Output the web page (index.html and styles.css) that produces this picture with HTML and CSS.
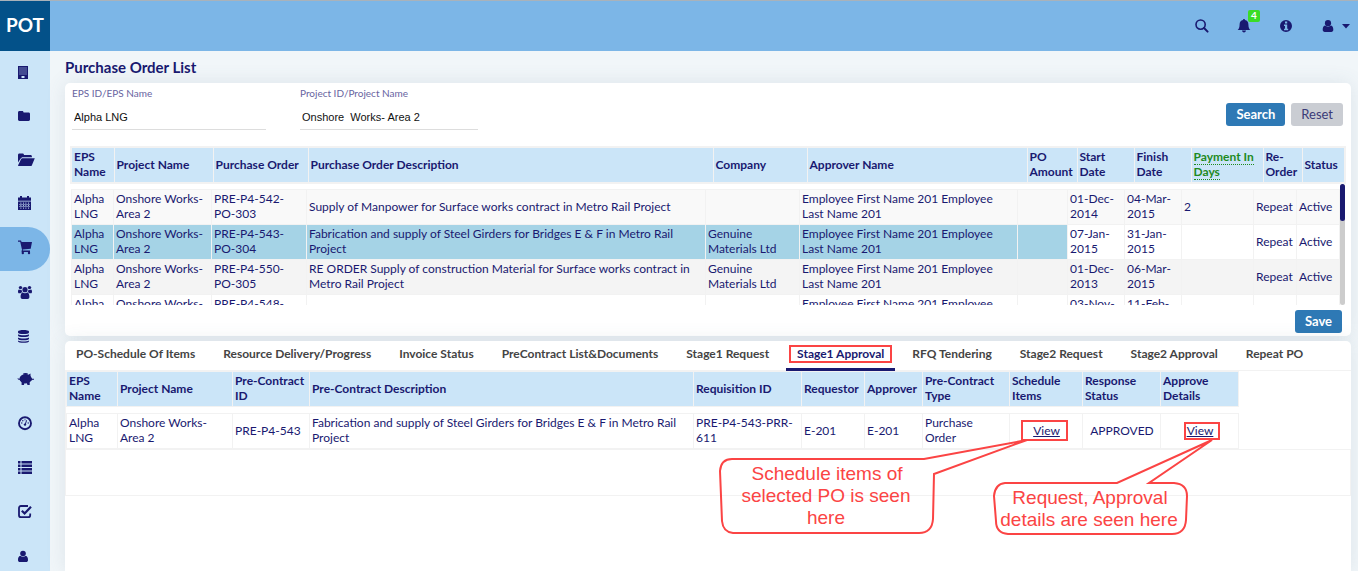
FILE: index.html
```
<!DOCTYPE html>
<html lang="en">
<head>
<meta charset="utf-8">
<title>Purchase Order List</title>
<link rel="stylesheet" href="styles.css">
</head>
<body>
<div class="app">
  <header class="topbar">
    <a class="brand" href="#">POT</a>
    <div class="tools">
      <button class="tool" aria-label="Search"><svg class="icon" viewBox="0 0 16 16"><circle cx="6.6" cy="6.6" r="4.600" fill="none" stroke="currentColor" stroke-width="1.600"/><path d="M10 10l3.600 3.600" stroke="currentColor" stroke-width="2" stroke-linecap="round"/></svg></button>
      <button class="tool" aria-label="Notifications"><svg class="icon" viewBox="0 0 16 16"><path d="M8 1c.7 0 1 .5 1 1.100c2.200.5 3.400 2.200 3.400 4.400 0 3 .8 4.500 2 5.500H1.600c1.200-1 2-2.500 2-5.500 0-2.200 1.200-3.900 3.400-4.400C7 1.500 7.300 1 8 1zM6 12.500h4c0 1.100-.9 1.900-2 1.900s-2-.8-2-1.900z"/></svg><span class="badge">4</span></button>
      <button class="tool" aria-label="Information"><svg class="icon" viewBox="0 0 16 16"><path fill-rule="evenodd" d="M8 2a6 6 0 1 0 0 12A6 6 0 0 0 8 2zM7 3.500h2.200v1.900H7zM6 6.500h3.200v4.200h1v1.500H6v-1.500h1V8H6z"/></svg></button>
      <button class="tool account" aria-label="Account"><svg class="icon" viewBox="0 0 16 16"><circle cx="8" cy="5.200" r="3.100"/><path d="M5 7.500c-1.700.4-2.300 2.200-2.300 4.300 0 1.400.8 2.100 2 2.100h6.600c1.200 0 2-.7 2-2.100 0-2.100-.6-3.900-2.300-4.300-1.600 1.500-4.400 1.500-6 0z"/></svg><svg class="caret" viewBox="0 0 8 5"><path d="M0 0h8L4 4.500z"/></svg></button>
    </div>
  </header>
  <nav class="sidebar" aria-label="Main">
    <a class="nav" href="#" aria-label="Companies"><svg class="nav-icon" viewBox="0 0 18 16"><path fill-rule="evenodd" d="M1 2h10v13H1zM2.500 3.500v1h1v-1zM4.500 3.500v1h1v-1zM6.500 3.500v1h1v-1zM8.500 3.500v1h1v-1zM2.500 5.500v1h1v-1zM4.500 5.500v1h1v-1zM6.500 5.500v1h1v-1zM8.500 5.500v1h1v-1zM2.500 7.500v1h1v-1zM4.500 7.500v1h1v-1zM6.500 7.500v1h1v-1zM8.500 7.500v1h1v-1zM2.500 9.500v1h1v-1zM4.500 9.500v1h1v-1zM6.500 9.500v1h1v-1zM8.500 9.500v1h1v-1zM4.500 12v2h3v-2z"/></svg></a>
    <a class="nav" href="#" aria-label="Folders"><svg class="nav-icon" viewBox="0 0 18 16"><path d="M1 4.500C1 3.600 1.600 3 2.400 3h2.800c.8 0 1.400.6 1.400 1.500h5c.8 0 1.400.6 1.400 1.400v5.700c0 .8-.6 1.400-1.400 1.400H2.400C1.600 13 1 12.400 1 11.600z"/></svg></a>
    <a class="nav" href="#" aria-label="Projects"><svg class="nav-icon" viewBox="0 0 18 16"><path d="M1 10.500V3c0-.9.6-1.500 1.400-1.500h3.200C6.400 1.500 7 2.100 7 3h6.500c.8 0 1.400.6 1.400 1.400v.8H6c-1.200 0-2 .6-2.500 1.500zM5.800 6.200h12l-3 7.200c-.2.500-.6.700-1.100.7h-12c-.5 0-.8-.3-.6-.8l2.900-6.100c.4-.7.9-1 1.800-1z"/></svg></a>
    <a class="nav" href="#" aria-label="Calendar"><svg class="nav-icon" viewBox="0 0 18 16"><path fill-rule="evenodd" d="M3 0h2v1.500h5V0h2v1.500h2v3.300H1V1.500h2zM1 5.500h13V14H1zM3.500 6.500v1.200h.8V6.500zM6 6.500v1.200h.8V6.500zM8.500 6.500v1.200h.8V6.500zM11 6.500v1.200h.8V6.500zM2 8h11v.6H2zM3.500 9v1h.8V9zM6 9v1h.8V9zM8.500 9v1h.8V9zM11 9v1h.8V9zM2 10.500h11v.6H2zM3.500 11.500v1.200h.8v-1.200zM6 11.500v1.200h.8v-1.200zM8.500 11.500v1.200h.8v-1.200zM11 11.500v1.200h.8v-1.200z"/></svg></a>
    <a class="nav active" href="#" aria-label="Purchase orders"><svg class="nav-icon" viewBox="0 0 18 16"><path d="M1 .5h2.700c.3 0 .5.200.6.600L4.500 2H15l-1.300 6.700-8 .9.200 1H13v1.300H5c-.4 0-.6-.3-.5-.7l.5-1.400L3.200 1.800H1z"/><circle cx="5.800" cy="13" r="1.200"/><circle cx="12" cy="13" r="1.200"/></svg></a>
    <a class="nav" href="#" aria-label="Teams"><svg class="nav-icon" viewBox="0 0 18 16"><circle cx="3.500" cy="3.600" r="1.700"/><circle cx="12.500" cy="3.600" r="1.700"/><circle cx="8" cy="5.700" r="2.600"/><path d="M1 7.700c0-1.300.3-2 1-2.200.8.500 1.600.5 2.600.2 0 1 .3 1.900.8 2.500-.8 0-1.400.4-1.800 1H2c-.7 0-1-.6-1-1.500zM15 7.700c0-1.300-.3-2-1-2.200-.8.500-1.600.5-2.600.2 0 1-.3 1.900-.8 2.500.8 0 1.400.4 1.800 1H14c.7 0 1-.6 1-1.500zM3.600 12.800c0-2.300.6-4 2-4.300 1.400 1 3.400 1 4.800 0 1.400.3 2 2 2 4.300 0 1.400-.7 2.200-1.900 2.200h-5c-1.200 0-1.900-.8-1.900-2.200z"/></svg></a>
    <a class="nav" href="#" aria-label="Data"><svg class="nav-icon" viewBox="0 0 18 16"><path d="M1 3.500C1 1.500 12 1.500 12 3.500v1C12 6.500 1 6.500 1 4.500zM1 6.300c2 1.400 9 1.400 11 0v1.300c0 2-11 2-11 0zM1 9.400c2 1.400 9 1.400 11 0v1.300c0 2-11 2-11 0zM1 12.500c2 1.400 9 1.400 11 0v.7c0 2-11 2-11 0z"/></svg></a>
    <a class="nav" href="#" aria-label="Budget"><svg class="nav-icon" viewBox="0 0 18 16"><ellipse cx="8.500" cy="6.800" rx="6" ry="4.600"/><path d="M10.500 3.200l3-1.700v3l1.700 2.200H17v1h-1.500L12.700 10v3h-2.200l-.8-2H7.500l-.6 2H4.600V10L2.800 7.800C1.600 8 .8 7.500.5 6.200h.8c.3.700.8.700 1.500.5z"/><ellipse cx="8.500" cy="2" rx="2.500" ry=".9"/></svg></a>
    <a class="nav" href="#" aria-label="Dashboard"><svg class="nav-icon" viewBox="0 0 18 16"><circle cx="8" cy="7.200" r="6" fill="none" stroke="currentColor" stroke-width="1.900"/><circle cx="4.800" cy="7" r=".7"/><circle cx="5.800" cy="4.800" r=".7"/><circle cx="8" cy="3.800" r=".6"/><circle cx="11.200" cy="7" r=".7"/><path d="M9.600 4.300l-1.300 4" stroke="currentColor"/><circle cx="8" cy="8.600" r="1.200"/></svg></a>
    <a class="nav" href="#" aria-label="Lists"><svg class="nav-icon" viewBox="0 0 18 16"><path d="M1 1h2.500v2.500H1zM4.500 1H15v2.500H4.500zM1 4.500h2.500V7H1zM4.500 4.500H15V7H4.500zM1 8h2.500v2.500H1zM4.500 8H15v2.500H4.500zM1 11.500h2.500V14H1zM4.500 11.500H15V14H4.500z"/></svg></a>
    <a class="nav" href="#" aria-label="Approvals"><svg class="nav-icon" viewBox="0 0 18 16"><path d="M11 2H4C2.700 2 2 2.800 2 4v7.200c0 1.200.7 2 2 2h7.200c1.200 0 2-.8 2-2V9.500" fill="none" stroke="currentColor" stroke-width="1.800"/><path d="M4.800 6.700L7.600 9.400l6.400-6.600" fill="none" stroke="currentColor" stroke-width="2.200"/></svg></a>
    <a class="nav" href="#" aria-label="Users"><svg class="nav-icon" viewBox="0 0 18 16"><circle cx="6" cy="5.500" r="2.800"/><path d="M3.300 7.800C1.700 8.100 1 9.800 1 11.900 1 13.300 1.800 14 2.900 14h6.200c1.100 0 1.900-.7 1.900-2.100 0-2.100-.7-3.800-2.300-4.100-1.500 1.400-3.900 1.400-5.400 0z"/></svg></a>
  </nav>
  <main class="main">
    <h1 class="title">Purchase Order List</h1>
    <section class="card orders">
      <form class="filters">
        <div class="field eps"><label for="eps">EPS ID/EPS Name</label><input id="eps" type="text" value="Alpha LNG"></div>
        <div class="field project"><label for="project">Project ID/Project Name</label><input id="project" type="text" value="Onshore  Works- Area 2"></div>
        <div class="filter-actions"><button class="btn primary" type="button">Search</button><button class="btn muted" type="button">Reset</button></div>
      </form>
      <div class="grid">
        <table class="table head">
          <colgroup><col class="w43"><col class="w99"><col class="w95"><col><col class="w94"><col class="w220"><col class="w50"><col class="w57"><col class="w57"><col class="w72"><col class="w39"><col class="w43"></colgroup>
          <thead><tr><th>EPS Name</th><th>Project Name</th><th>Purchase Order</th><th>Purchase Order Description</th><th>Company</th><th>Approver Name</th><th>PO Amount</th><th>Start Date</th><th>Finish Date</th><th><a class="pay" href="#">Payment In Days</a></th><th>Re-Order</th><th>Status</th></tr></thead>
        </table>
        <div class="scroller">
          <div class="viewport">
            <table class="table body">
              <colgroup><col class="w42"><col class="w98"><col class="w95"><col><col class="w94"><col class="w218"><col class="w50"><col class="w57"><col class="w57"><col class="w72"><col class="w43"><col class="w43"></colgroup>
              <tbody>
                <tr class="soft"><td>Alpha LNG</td><td>Onshore Works- Area 2</td><td>PRE-P4-542-PO-303</td><td>Supply of Manpower for Surface works contract in Metro Rail Project</td><td></td><td>Employee First Name 201 Employee Last Name 201</td><td></td><td>01-Dec-2014</td><td>04-Mar-2015</td><td>2</td><td>Repeat</td><td>Active</td></tr>
                <tr class="selected"><td>Alpha LNG</td><td>Onshore Works- Area 2</td><td>PRE-P4-543-PO-304</td><td>Fabrication and supply of Steel Girders for Bridges E &amp; F in Metro Rail Project</td><td>Genuine Materials Ltd</td><td>Employee First Name 201 Employee Last Name 201</td><td></td><td>07-Jan-2015</td><td>31-Jan-2015</td><td></td><td>Repeat</td><td>Active</td></tr>
                <tr class="hover"><td>Alpha LNG</td><td>Onshore Works- Area 2</td><td>PRE-P4-550-PO-305</td><td>RE ORDER Supply of construction Material for Surface works contract in Metro Rail Project</td><td>Genuine Materials Ltd</td><td>Employee First Name 201 Employee Last Name 201</td><td></td><td>01-Dec-2013</td><td>06-Mar-2015</td><td></td><td>Repeat</td><td>Active</td></tr>
                <tr><td>Alpha LNG</td><td>Onshore Works- Area 2</td><td>PRE-P4-548-PO-306</td><td></td><td></td><td>Employee First Name 201 Employee Last Name 201</td><td></td><td>03-Nov-2014</td><td>11-Feb-2015</td><td></td><td></td><td></td></tr>
              </tbody>
            </table>
          </div>
          <div class="track"><div class="thumb"></div></div>
        </div>
      </div>
      <div class="save-row"><button class="btn primary" type="button">Save</button></div>
    </section>
    <section class="card detail">
      <div class="tabs" role="tablist">
        <button class="tab" role="tab">PO-Schedule Of Items</button>
        <button class="tab" role="tab">Resource Delivery/Progress</button>
        <button class="tab" role="tab">Invoice Status</button>
        <button class="tab" role="tab">PreContract List&amp;Documents</button>
        <button class="tab" role="tab">Stage1 Request</button>
        <button class="tab current" role="tab" aria-selected="true">Stage1 Approval</button>
        <button class="tab" role="tab">RFQ Tendering</button>
        <button class="tab" role="tab">Stage2 Request</button>
        <button class="tab" role="tab">Stage2 Approval</button>
        <button class="tab" role="tab">Repeat PO</button>
      </div>
      <div class="panel">
        <table class="table approvals">
          <colgroup><col class="w51"><col class="w115"><col class="w77"><col class="w384"><col class="w108"><col class="w63"><col class="w58"><col class="w87"><col class="w73"><col class="w78"><col class="w78"></colgroup>
          <thead>
            <tr><th>EPS Name</th><th>Project Name</th><th>Pre-Contract ID</th><th>Pre-Contract Description</th><th>Requisition ID</th><th>Requestor</th><th>Approver</th><th>Pre-Contract Type</th><th>Schedule Items</th><th>Response Status</th><th>Approve Details</th></tr>
          </thead>
          <tbody>
            <tr class="spacer"><td colspan="11"></td></tr>
            <tr><td>Alpha LNG</td><td>Onshore Works- Area 2</td><td>PRE-P4-543</td><td>Fabrication and supply of Steel Girders for Bridges E &amp; F in Metro Rail Project</td><td>PRE-P4-543-PRR-611</td><td>E-201</td><td>E-201</td><td>Purchase<br>Order</td><td class="center"><a href="#">View</a></td><td class="center">APPROVED</td><td class="center"><a href="#">View</a></td></tr>
          </tbody>
        </table>
        <div class="panel-rest"></div>
      </div>
    </section>
  </main>
  <svg class="notes" width="1358" height="571" viewBox="0 0 1358 571">
    <g fill="none" stroke="#fb4444" stroke-width="2">
      <rect x="790" y="346" width="101" height="16"/>
      <rect x="1022" y="421" width="45" height="19"/>
      <rect x="1185" y="423" width="34" height="16"/>
      <path d="M732 459H924L1027 440L934 474L933 519Q932 533 919 533H733Q723 532 722 521L720 471Q721 459 732 459z"/>
      <path d="M1005 483H1117L1212 440L1149 483H1174Q1187 484 1187 496L1186 520Q1185 534 1172 534H1008Q996 533 996 521L994 496Q995 484 1005 483z"/>
    </g>
    <g class="note-text" text-anchor="middle">
      <text x="827" y="480">Schedule items of</text>
      <text x="826" y="502">selected PO is seen</text>
      <text x="826" y="524">here</text>
      <text x="1090" y="504">Request, Approval</text>
      <text x="1089" y="526">details are seen here</text>
    </g>
  </svg>
</div>
</body>
</html>
```
FILE: styles.css
```
* { box-sizing: border-box; }
body { margin: 0; font-family: Lato, "Liberation Sans", sans-serif; font-size: 12px; line-height: 15px; color: #191970; }
button, input { font: inherit; color: inherit; margin: 0; }
button { border: 0; background: none; padding: 0; cursor: pointer; }
a { color: inherit; }
svg { fill: currentColor; display: block; }

.app { position: relative; display: grid; grid-template: 51px minmax(0, 1fr) / 50px minmax(0, 1fr); height: 100vh; overflow: hidden; background: #f1f6f9; }
.topbar { grid-column: 1 / -1; display: flex; justify-content: space-between; background: #7cb6e7; border-top: 1px solid #a9b2ba; }
.brand { display: flex; width: 50px; align-items: center; justify-content: center; padding-bottom: 4px; background: #035189; color: #fff; font-size: 19px; font-weight: 700; text-decoration: none; }
.tools { display: flex; align-items: center; gap: 26px; padding-right: 8px; }
.tool { position: relative; }
.icon { width: 16px; height: 16px; }
.account { display: flex; align-items: center; gap: 6px; }
.caret { width: 8px; height: 5px; }
.badge { position: absolute; left: 12px; top: -8px; width: 12px; height: 12px; border-radius: 2px; background: #3bdc25; color: #fff; font-size: 10px; font-weight: 700; line-height: 11px; }

.sidebar { background: #cbe5f8; overflow: hidden; }
.nav { display: flex; align-items: center; height: 44px; padding: 0 0 2px 17px; }
.nav.active { background: #7cb6e7; border-radius: 0 22px 22px 0; }
.nav-icon { width: 18px; height: 16px; }

.main { display: flex; flex-direction: column; padding: 8px 7px 0 15px; }
.title { margin: 0 0 7px; font-size: 15px; line-height: 17px; font-weight: 700; }
.card { background: #fff; border-radius: 5px; box-shadow: 0 0 20px rgba(70, 100, 120, .12); }
.orders { margin-bottom: 5px; padding-bottom: 3px; }
.detail { flex: 1; border-radius: 5px 5px 0 0; }

.filters { display: flex; height: 63px; padding: 4px 8px 0 7px; }
.field { display: flex; flex-direction: column; }
.field label { font-size: 10px; line-height: 12px; color: #68649f; }
.field input { height: 31px; width: 100%; border: 0; border-bottom: 1px solid #ddd; outline: 0; padding: 6px 2px 0; background: none; font-family: "Liberation Sans", Arial, sans-serif; font-size: 11px; color: #111; }
.eps { width: 194px; margin-right: 34px; }
.project { width: 178px; }
.filter-actions { display: flex; gap: 6px; margin: 16px 0 0 auto; }
.btn { height: 23px; padding: 0 10px; border-radius: 3px; font-size: 13px; }
.primary { background: #2e79b5; color: #fff; font-weight: 700; }
.muted { background: #cacdd3; color: #3b3b78; }

.grid { margin: 0 5px; }
.table { border-collapse: collapse; table-layout: fixed; width: 100%; }
.table th, .table td { height: 35px; padding: 1px 1px 3px 2px; border: 1px solid #f2f2f2; text-align: left; vertical-align: middle; }
.table th { background: #cbe5f8; font-weight: 700; }
.head { border: 2px solid #f2f2f2; }
.pay { color: #1e8a1e; text-decoration: none; border-bottom: 1px dotted #1e8a1e; }
.scroller { display: flex; height: 121px; padding-right: 1px; }
.viewport { flex: 1; min-width: 0; overflow: hidden; padding: 5px 0 0 1px; }
.track { width: 5px; background: #ccc; border-radius: 3px; }
.thumb { height: 37px; background: #191970; border-radius: 3px; }
.soft { background: #f9f9f9; }
.hover { background: #f4f4f4; }
.selected td:nth-child(-n+7) { background: #a5d3e6; }
.save-row { display: flex; justify-content: flex-end; padding: 5px 9px 0 0; }

.tabs { display: flex; gap: 6px; height: 29px; }
.tab { height: 30px; padding: 0 11px 3px; border-bottom: 3px solid transparent; color: #444; font-weight: 700; white-space: nowrap; }
.current { color: #191970; border-bottom-color: #191970; }
.panel { border-top: 1px solid #f2f2f2; border-left: 1px solid #f2f2f2; }
.approvals { width: auto; }
.approvals .spacer td { height: 7px; padding: 0; border-color: #fff; border-top-color: #f2f2f2; border-bottom-color: #f2f2f2; }
.table .center { text-align: center; }
.panel-rest { height: 47px; border: 1px solid #f2f2f2; border-left: 0; }

.w39 { width: 39px; } .w42 { width: 42px; } .w43 { width: 43px; } .w50 { width: 50px; } .w51 { width: 51px; }
.w57 { width: 57px; } .w58 { width: 58px; } .w63 { width: 63px; } .w72 { width: 72px; } .w73 { width: 73px; }
.w77 { width: 77px; } .w78 { width: 78px; } .w87 { width: 87px; } .w94 { width: 94px; } .w95 { width: 95px; }
.w98 { width: 98px; } .w99 { width: 99px; } .w108 { width: 108px; } .w115 { width: 115px; } .w218 { width: 218px; }
.w220 { width: 220px; } .w384 { width: 384px; }

.notes { position: absolute; left: 0; top: 0; pointer-events: none; }
.note-text { fill: #fb4444; font-family: "Liberation Sans", Arial, sans-serif; font-size: 19px; }
```
